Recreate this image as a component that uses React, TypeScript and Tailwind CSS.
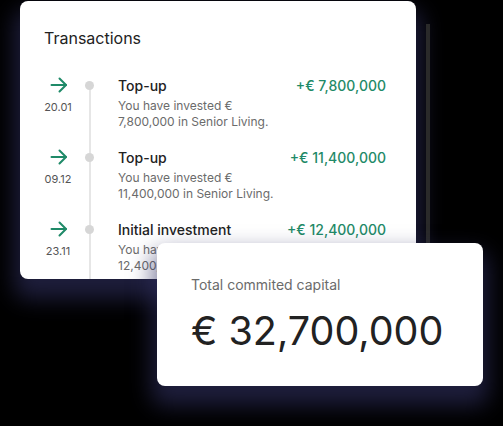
import React from "react";

const Arrow = () => (
  <svg width="18" height="16" viewBox="0 0 18 16" fill="none" stroke="#1f8a68" strokeWidth="2" strokeLinecap="round" strokeLinejoin="round">
    <path d="M1.5 8H16" />
    <path d="M9.5 1.5L16 8L9.5 14.5" />
  </svg>
);

type Row = { date: string; title: string; amount: string; l1: string; l2: string };

const rows: Row[] = [
  { date: "20.01", title: "Top-up", amount: "+€ 7,800,000", l1: "You have invested €", l2: "7,800,000 in Senior Living." },
  { date: "09.12", title: "Top-up", amount: "+€ 11,400,000", l1: "You have invested €", l2: "11,400,000 in Senior Living." },
  { date: "23.11", title: "Initial investment", amount: "+€ 12,400,000", l1: "You have invested €", l2: "12,400,000 in Senior Living." },
];

export default function App() {
  return (
    <div
      className="relative w-[503px] h-[426px] bg-black overflow-hidden"
      style={{ fontFamily: "Inter, 'Noto Sans', sans-serif" }}
    >
      <div className="absolute left-[426px] top-[24px] w-[4px] h-[220px] bg-[#2a2a2a]" />
      <div className="ml-[20px] mt-[1px] w-[396px] h-[278px] bg-white rounded-lg shadow-[0_14px_22px_6px_rgba(50,50,100,0.6)] pt-[27px] pl-[24px] overflow-hidden">
        <div className="text-[16px] leading-[20px] text-[#222]">Transactions</div>
        <div className="relative mt-[29px]">
          <div className="absolute left-[45px] top-[7px] w-[2px] h-[300px] bg-[#e6e6e6]" />
          {rows.map((r, i) => (
            <div key={i} className="relative flex h-[72px]">
              <div className="w-[28px] flex flex-col items-center">
                <div className="ml-[2px]">
                  <Arrow />
                </div>
                <div className="mt-[8px] text-[11px] leading-[12px] text-[#555]">{r.date}</div>
              </div>
              <div className="w-[46px] flex justify-start">
                <div className="ml-[13px] mt-[4px] w-[9px] h-[9px] rounded-full bg-[#d6d6d6]" />
              </div>
              <div className="w-[268px]">
                <div className="flex justify-between items-baseline">
                  <div className="text-[14px] leading-[18px] font-medium text-[#222]">{r.title}</div>
                  <div className="text-[14px] leading-[18px] font-medium text-[#1f8a68]">{r.amount}</div>
                </div>
                <div className="mt-[3px] text-[12px] leading-[16px] text-[#6b6b6b]">
                  <div>{r.l1}</div>
                  <div>{r.l2}</div>
                </div>
              </div>
            </div>
          ))}
        </div>
      </div>
      <div className="absolute left-[157px] top-[243px] w-[326px] h-[143px] bg-white rounded-lg shadow-[0_14px_22px_6px_rgba(50,50,100,0.6)] pl-[34px] pt-[33px]">
        <div className="text-[14px] leading-[18px] text-[#6b6b6b]">Total commited capital</div>
        <div className="mt-[15px] text-[39.5px] leading-[44px] text-[#222]">€ 32,700,000</div>
      </div>
    </div>
  );
}
